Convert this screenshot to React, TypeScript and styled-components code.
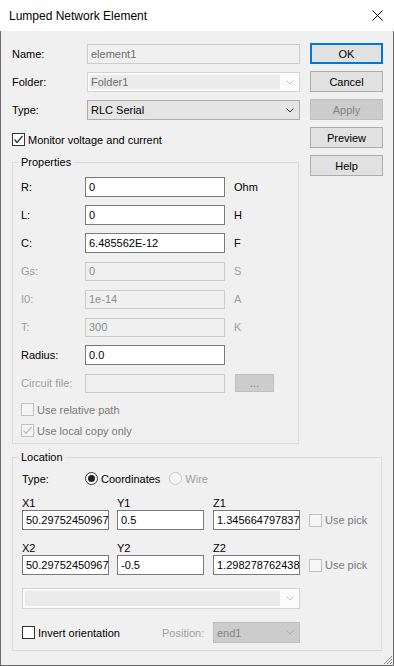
import React from "react"
import styled, { createGlobalStyle, css } from "styled-components"

const GlobalStyle = createGlobalStyle`
  html, body {
    margin: 0;
    padding: 0;
    background: #f0f0f0;
  }
  body {
    font-family: "Liberation Sans", Arial, sans-serif;
    font-size: 11px;
    color: #000;
  }
  * {
    box-sizing: border-box;
  }
`

const Window = styled.div`
  position: relative;
  width: 394px;
  height: 666px;
  display: flex;
  flex-direction: column;
  background: #f0f0f0;
  overflow: hidden;
`

const TitleBar = styled.div`
  flex: none;
  height: 31px;
  background: #fff;
  display: flex;
  align-items: center;
  justify-content: space-between;
  padding: 0 11px 0 9px;
  font-size: 12px;
`

const Body = styled.div`
  flex: 1;
  border: 1px solid #6b6b6b;
  border-top: none;
  padding: 13px 0 0 11px;
`

const TopSection = styled.div`
  display: flex;
  align-items: flex-start;
`

const LeftCol = styled.div`
  width: 288px;
  display: flex;
  flex-direction: column;
`

const FormRow = styled.div`
  display: grid;
  grid-template-columns: 75px 213px;
  align-items: center;
  height: 20px;
  margin-bottom: 8px;
`

const Label = styled.span<{ $disabled?: boolean }>`
  line-height: 13px;
  white-space: nowrap;
  color: ${(p) => (p.$disabled ? "#a0a0a0" : "#000")};
`

type FieldKind = "normal" | "readonly" | "disabled"

const TextBox = styled.div<{ $kind?: FieldKind; $w?: number; $h?: number }>`
  width: ${(p) => (p.$w ? `${p.$w}px` : "100%")};
  height: ${(p) => p.$h ?? 20}px;
  display: flex;
  align-items: center;
  padding: 0 0 0 3px;
  overflow: hidden;
  white-space: nowrap;
  border: 1px solid #7a7a7a;
  background: #fff;
  color: #000;
  ${(p) =>
    p.$kind === "readonly" &&
    css`
      border-color: #cccccc;
      background: #f0f0f0;
      color: #6d6d6d;
    `}
  ${(p) =>
    p.$kind === "disabled" &&
    css`
      border-color: #cccccc;
      background: #f0f0f0;
      color: #8c8c8c;
    `}
`

type ComboKind = "normal" | "disabled" | "grayed"

const Combo = styled.div<{ $kind?: ComboKind; $w?: number; $h?: number }>`
  width: ${(p) => (p.$w ? `${p.$w}px` : "100%")};
  height: ${(p) => p.$h ?? 20}px;
  display: flex;
  align-items: stretch;
  border: 1px solid #adadad;
  background: #e5e5e5;
  color: #000;
  ${(p) =>
    p.$kind === "disabled" &&
    css`
      border-color: #d4d4d4;
      background: #fbfbfb;
      color: #6d6d6d;
      padding: 2px 0 2px 2px;
    `}
  ${(p) =>
    p.$kind === "grayed" &&
    css`
      border-color: #bfbfbf;
      background: #cccccc;
      color: #838383;
    `}
`

const ComboText = styled.div<{ $inset?: boolean }>`
  flex: 1;
  display: flex;
  align-items: center;
  padding-left: ${(p) => (p.$inset ? 1 : 3)}px;
  background: ${(p) => (p.$inset ? "#ebebeb" : "transparent")};
  white-space: nowrap;
  overflow: hidden;
`

const ChevronBox = styled.div`
  width: 19px;
  display: flex;
  align-items: center;
  justify-content: center;
`

const Chevron = ({ color }: { color: string }) => (
  <svg width="8" height="5" viewBox="0 0 8 5">
    <polyline points="0.5,0.5 4,4 7.5,0.5" fill="none" stroke={color} strokeWidth="1" />
  </svg>
)

const CheckRow = styled.label<{ $disabled?: boolean; $mt?: number }>`
  display: flex;
  align-items: center;
  height: 13px;
  margin-top: ${(p) => p.$mt ?? 0}px;
  color: ${(p) => (p.$disabled ? "#7a7a7a" : "#000")};
  white-space: nowrap;
`

const Box = styled.span<{ $disabled?: boolean }>`
  width: 13px;
  height: 13px;
  flex: none;
  display: flex;
  align-items: center;
  justify-content: center;
  border: 1px solid ${(p) => (p.$disabled ? "#c2c2c2" : "#333")};
  background: ${(p) => (p.$disabled ? "#f6f6f6" : "#fff")};
  margin-right: 3px;
`

const CheckMark = ({ color }: { color: string }) => (
  <svg width="11" height="11" viewBox="0 0 11 11">
    <polyline points="1.5,5.5 4,8.5 9.5,2" fill="none" stroke={color} strokeWidth="1.3" />
  </svg>
)

const Check = ({
  text,
  checked,
  disabled,
  mt,
}: {
  text: string
  checked?: boolean
  disabled?: boolean
  mt?: number
}) => (
  <CheckRow $disabled={disabled} $mt={mt}>
    <Box $disabled={disabled}>{checked && <CheckMark color={disabled ? "#bcbcbc" : "#333"} />}</Box>
    <span>{text}</span>
  </CheckRow>
)

const Group = styled.div<{ $w: number; $mt: number; $pad: string }>`
  position: relative;
  width: ${(p) => p.$w}px;
  margin-top: ${(p) => p.$mt}px;
  border: 1px solid #dcdcdc;
  padding: ${(p) => p.$pad};
`

const Legend = styled.span`
  position: absolute;
  top: -7px;
  left: 6px;
  padding: 0 2px;
  line-height: 13px;
  background: #f0f0f0;
`

const PropGrid = styled.div`
  display: grid;
  grid-template-columns: 64px 140px auto;
  grid-auto-rows: 20px;
  row-gap: 8px;
  align-items: center;
`

const Unit = styled.span<{ $disabled?: boolean }>`
  padding-left: 9px;
  color: ${(p) => (p.$disabled ? "#a0a0a0" : "#000")};
`

const DotsButton = styled.div`
  margin-left: 10px;
  width: 39px;
  height: 18px;
  border: 1px solid #bfbfbf;
  background: #cccccc;
  color: #838383;
  display: flex;
  align-items: center;
  justify-content: center;
  line-height: 10px;
`

const CheckList = styled.div`
  display: flex;
  flex-direction: column;
  gap: 8px;
  margin-top: 10px;
`

const ButtonCol = styled.div`
  display: flex;
  flex-direction: column;
  gap: 7px;
  margin: -1px 0 0 10px;
`

const Button = styled.div<{ $default?: boolean; $disabled?: boolean }>`
  width: 73px;
  height: 21px;
  display: flex;
  align-items: center;
  justify-content: center;
  border: 1px solid #adadad;
  background: #e1e1e1;
  color: #000;
  ${(p) =>
    p.$default &&
    css`
      border-color: #0078d7;
      box-shadow: inset 0 0 0 1px #0078d7;
    `}
  ${(p) =>
    p.$disabled &&
    css`
      border-color: #bfbfbf;
      background: #cccccc;
      color: #838383;
    `}
`

const TypeRow = styled.div`
  display: flex;
  align-items: center;
  height: 13px;
`

const RadioLabel = styled.span<{ $disabled?: boolean; $w?: number }>`
  width: ${(p) => (p.$w ? `${p.$w}px` : "auto")};
  margin-right: ${(p) => (p.$w ? 0 : 9)}px;
  color: ${(p) => (p.$disabled ? "#a0a0a0" : "#000")};
  white-space: nowrap;
`

const Radio = styled.span<{ $checked?: boolean; $disabled?: boolean }>`
  width: 13px;
  height: 13px;
  flex: none;
  border-radius: 50%;
  border: 1px solid ${(p) => (p.$disabled ? "#c8c8c8" : "#333")};
  background: ${(p) => (p.$disabled ? "#f5f5f5" : "#fff")};
  display: flex;
  align-items: center;
  justify-content: center;
  margin-right: 3px;
  &::after {
    content: "";
    display: ${(p) => (p.$checked ? "block" : "none")};
    width: 7px;
    height: 7px;
    border-radius: 50%;
    background: #222;
  }
`

const CoordBlock = styled.div`
  display: flex;
  flex-direction: column;
  gap: 11px;
  margin-top: 11px;
`

const CoordSet = styled.div`
  display: grid;
  grid-template-columns: 95px 96px 87px auto;
  grid-template-rows: 14px 20px;
  align-items: center;
`

const CoordLabel = styled.span`
  line-height: 14px;
`

const PickCheck = styled.div`
  padding-left: 9px;
`

const Wide = styled.div`
  margin-top: 13px;
  width: 278px;
`

const InvertRow = styled.div`
  display: flex;
  align-items: center;
  height: 21px;
  margin-top: 13px;
`

const InvertCell = styled.div`
  width: 140px;
`

const PositionLabel = styled.span`
  width: 51px;
  color: #a0a0a0;
`

const SizeGrip = styled.svg`
  position: absolute;
  right: 1px;
  bottom: 1px;
`

const coords = [
  { n: "1", x: "50.29752450967", y: "0.5", z: "1.345664797837" },
  { n: "2", x: "50.29752450967", y: "-0.5", z: "1.298278762438" },
]

const props = [
  { label: "R:", value: "0", unit: "Ohm", on: true },
  { label: "L:", value: "0", unit: "H", on: true },
  { label: "C:", value: "6.485562E-12", unit: "F", on: true },
  { label: "Gs:", value: "0", unit: "S", on: false },
  { label: "I0:", value: "1e-14", unit: "A", on: false },
  { label: "T:", value: "300", unit: "K", on: false },
  { label: "Radius:", value: "0.0", unit: "", on: true },
]

export default function App() {
  return (
    <>
      <GlobalStyle />
      <Window>
        <TitleBar>
          <span>Lumped Network Element</span>
          <svg width="11" height="11" viewBox="0 0 11 11">
            <path d="M0.5 0.5 L10.5 10.5 M10.5 0.5 L0.5 10.5" stroke="#000" strokeWidth="1" />
          </svg>
        </TitleBar>
        <Body>
          <TopSection>
            <LeftCol>
              <FormRow>
                <Label>Name:</Label>
                <TextBox $kind="readonly">element1</TextBox>
              </FormRow>
              <FormRow>
                <Label>Folder:</Label>
                <Combo $kind="disabled">
                  <ComboText $inset>Folder1</ComboText>
                  <ChevronBox>
                    <Chevron color="#c4c4c4" />
                  </ChevronBox>
                </Combo>
              </FormRow>
              <FormRow>
                <Label>Type:</Label>
                <Combo>
                  <ComboText>RLC Serial</ComboText>
                  <ChevronBox>
                    <Chevron color="#333" />
                  </ChevronBox>
                </Combo>
              </FormRow>
              <Check text="Monitor voltage and current" checked mt={5} />
              <Group $w={287} $mt={16} $pad="14px 8px 6px 8px">
                <Legend>Properties</Legend>
                <PropGrid>
                  {props.map((p) => (
                    <React.Fragment key={p.label}>
                      <Label $disabled={!p.on}>{p.label}</Label>
                      <TextBox $kind={p.on ? "normal" : "disabled"} $h={p.on ? 20 : 19}>
                        {p.value}
                      </TextBox>
                      <Unit $disabled={!p.on}>{p.unit}</Unit>
                    </React.Fragment>
                  ))}
                  <Label $disabled>Circuit file:</Label>
                  <TextBox $kind="disabled" $h={19} />
                  <DotsButton>...</DotsButton>
                </PropGrid>
                <CheckList>
                  <Check text="Use relative path" disabled />
                  <Check text="Use local copy only" checked disabled />
                </CheckList>
              </Group>
            </LeftCol>
            <ButtonCol>
              <Button $default>OK</Button>
              <Button>Cancel</Button>
              <Button $disabled>Apply</Button>
              <Button>Preview</Button>
              <Button>Help</Button>
            </ButtonCol>
          </TopSection>
          <Group $w={370} $mt={13} $pad="14px 8px 7px 9px">
            <Legend>Location</Legend>
            <TypeRow>
              <RadioLabel $w={63}>Type:</RadioLabel>
              <Radio $checked />
              <RadioLabel>Coordinates</RadioLabel>
              <Radio $disabled />
              <RadioLabel $disabled>Wire</RadioLabel>
            </TypeRow>
            <CoordBlock>
              {coords.map((c) => (
                <CoordSet key={c.n}>
                  <CoordLabel>X{c.n}</CoordLabel>
                  <CoordLabel>Y{c.n}</CoordLabel>
                  <CoordLabel>Z{c.n}</CoordLabel>
                  <span />
                  <TextBox $w={87}>{c.x}</TextBox>
                  <TextBox $w={87}>{c.y}</TextBox>
                  <TextBox $w={87}>{c.z}</TextBox>
                  <PickCheck>
                    <Check text="Use pick" disabled />
                  </PickCheck>
                </CoordSet>
              ))}
            </CoordBlock>
            <Wide>
              <Combo $kind="disabled" $h={21}>
                <ComboText $inset />
                <ChevronBox>
                  <Chevron color="#c4c4c4" />
                </ChevronBox>
              </Combo>
            </Wide>
            <InvertRow>
              <InvertCell>
                <Check text="Invert orientation" />
              </InvertCell>
              <PositionLabel>Position:</PositionLabel>
              <Combo $kind="grayed" $w={87} $h={21}>
                <ComboText>end1</ComboText>
                <ChevronBox>
                  <Chevron color="#a8a8a8" />
                </ChevronBox>
              </Combo>
            </InvertRow>
          </Group>
        </Body>
        <SizeGrip width="11" height="11" viewBox="0 0 11 11">
          <path d="M10 2 L2 10 M10 5 L5 10 M10 8 L8 10" stroke="#8a8a8a" strokeWidth="1" />
        </SizeGrip>
      </Window>
    </>
  )
}
